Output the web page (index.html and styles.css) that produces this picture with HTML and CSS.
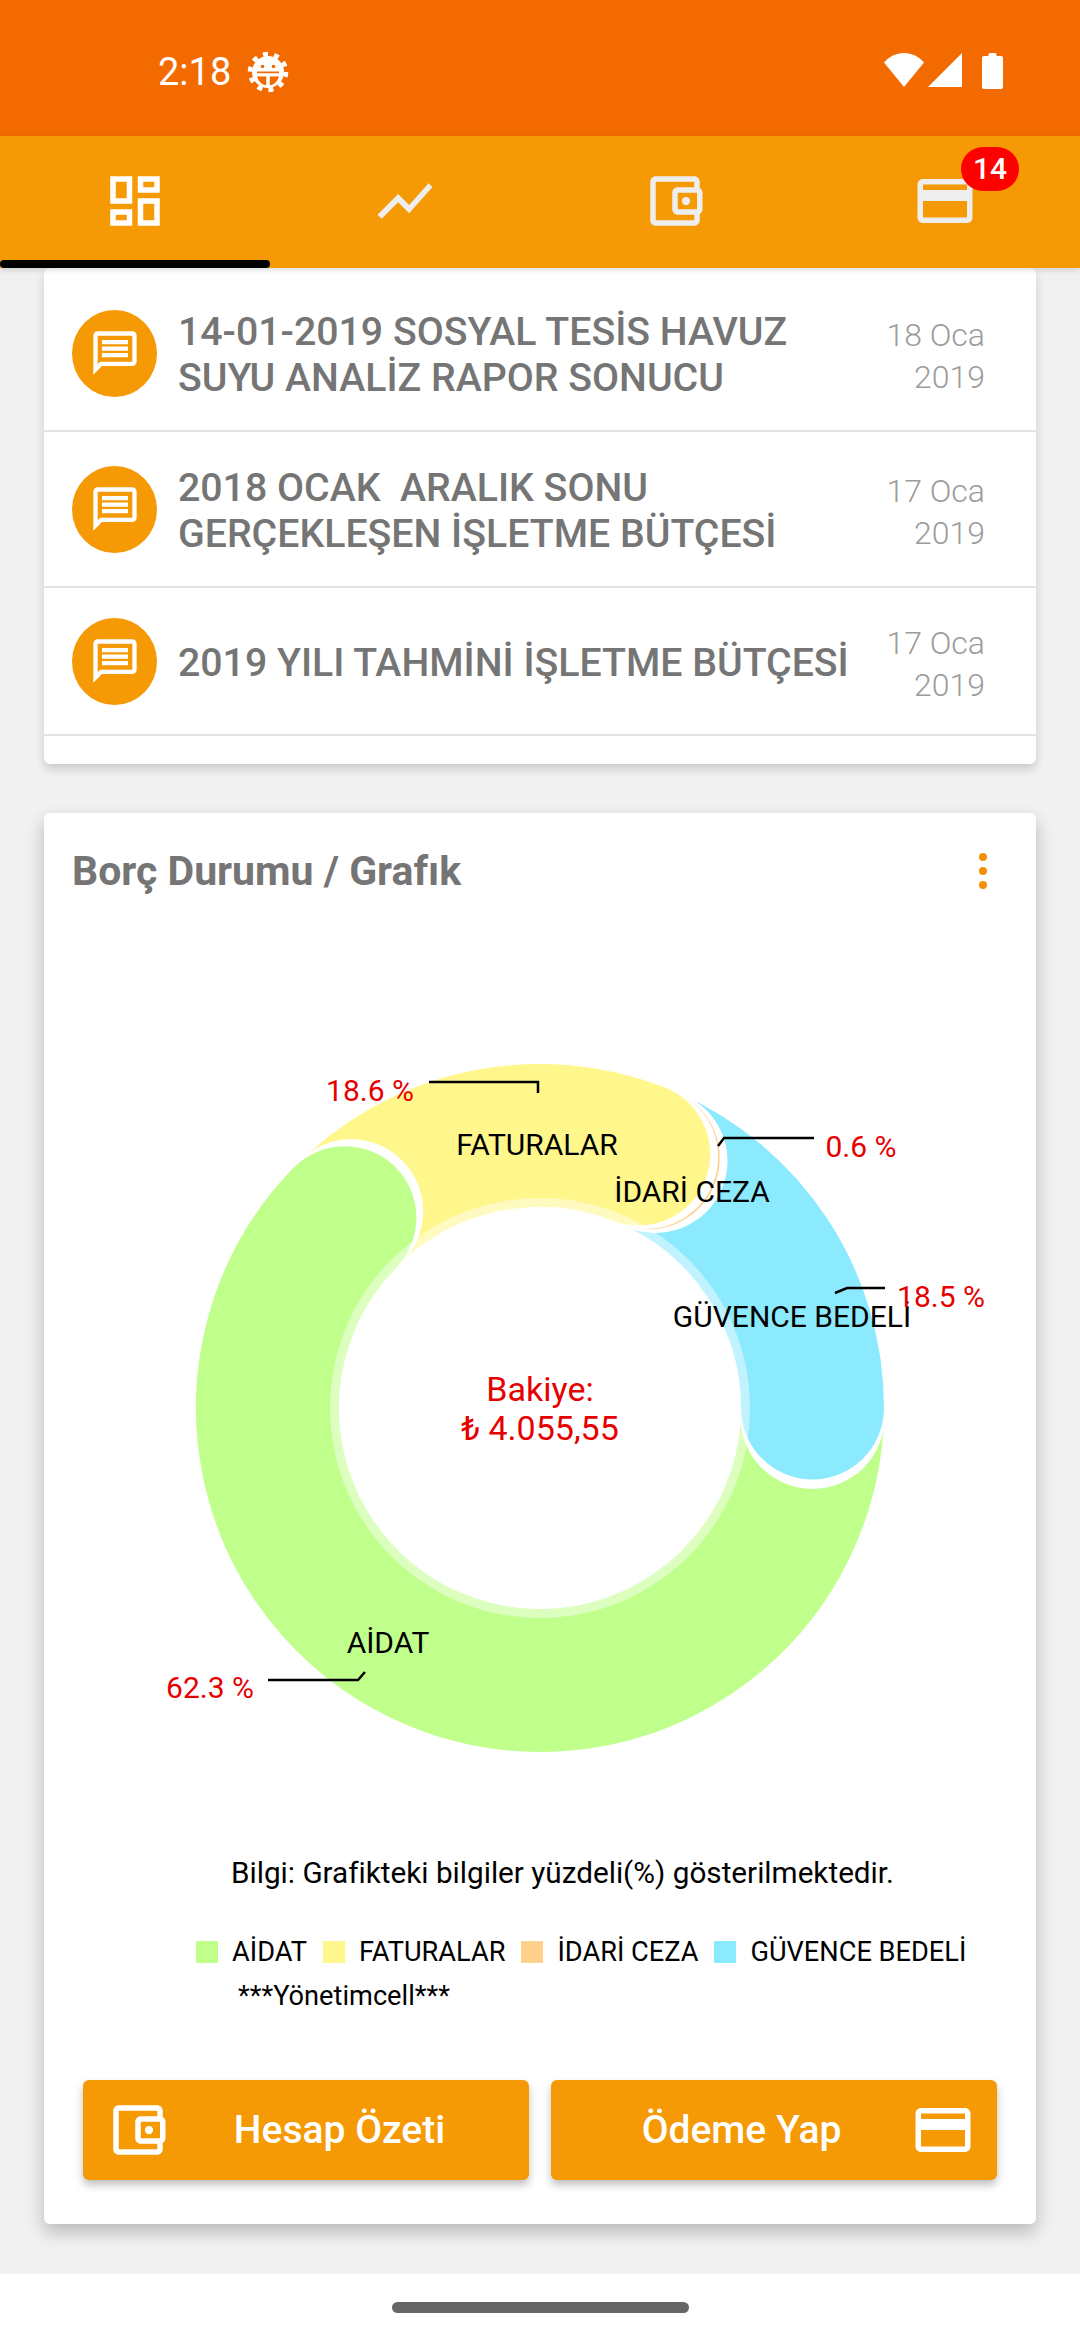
FILE: index.html
```html
<!DOCTYPE html>
<html lang="tr">
<head>
<meta charset="utf-8">
<title>Yönetimcell</title>
<link rel="stylesheet" href="styles.css">
</head>
<body>
<div class="screen">
  <header class="status">
    <div class="status-left">
      <span class="clock">2:18</span>
      <svg class="gear" viewBox="0 0 44 44">
        <circle cx="22" cy="22" r="18" fill="none" stroke="#fff" stroke-width="4.500" stroke-dasharray="5 6.310"/>
        <circle cx="22" cy="22" r="16" fill="#fff"/>
        <path d="M11 24.500h22a11 11 0 0 1-22 0z" fill="#f36a00"/>
        <rect x="11" y="21.500" width="22" height="2" fill="#f36a00"/>
        <rect x="10" y="23.400" width="24" height="3" fill="#fff"/>
        <rect x="20.200" y="26" width="3.600" height="10" fill="#fff"/>
        <circle cx="16.500" cy="16.500" r="1.800" fill="#f36a00"/>
        <circle cx="27.500" cy="16.500" r="1.800" fill="#f36a00"/>
      </svg>
    </div>
    <div class="status-right">
      <svg class="wifi" viewBox="0 0 40 34"><path d="M20 34 0 9.500C5 3.600 12 0 20 0s15 3.600 20 9.500z" fill="#fff"/></svg>
      <svg class="signal" viewBox="0 0 34 34"><path d="M34 0v34H0z" fill="#fff"/></svg>
      <svg class="battery" viewBox="0 0 21 36"><path d="M6.500 3V1.500q0-1.500 1.500-1.500h5q1.500 0 1.500 1.500V3H19q2 0 2 2v29q0 2-2 2H2q-2 0-2-2V5q0-2 2-2z" fill="#fff"/></svg>
    </div>
  </header>

  <nav class="tabs">
    <div class="tab">
      <svg class="tab-icon active" viewBox="0 0 24 24"><path d="M19 5v2h-4V5h4M9 5v6H5V5h4m10 8v6h-4v-6h4M9 17v2H5v-2h4M21 3h-8v6h8V3zM11 3H3v10h8V3zm10 8h-8v10h8V11zm-10 4H3v6h8v-6z"/></svg>
      <span class="tab-line"></span>
    </div>
    <div class="tab">
      <svg class="tab-icon" viewBox="0 0 24 24"><path d="M3.500 18.490l6-6.010 4 4L22 6.920l-1.410-1.410-7.090 7.970-4-4L2 16.990z"/></svg>
    </div>
    <div class="tab">
      <svg class="tab-icon" viewBox="0 0 24 24"><path d="M21 7.280V5c0-1.100-.9-2-2-2H5c-1.110 0-2 .9-2 2v14c0 1.100.89 2 2 2h14c1.100 0 2-.9 2-2v-2.280c.59-.35 1-.98 1-1.720V9c0-.74-.41-1.380-1-1.720zM20 9v6h-7V9h7zM5 19V5h14v2h-6c-1.100 0-2 .9-2 2v6c0 1.100.9 2 2 2h6v2H5z"/><circle cx="16" cy="12" r="1.500"/></svg>
    </div>
    <div class="tab">
      <svg class="tab-icon" viewBox="0 0 24 24"><path d="M20 4H4c-1.110 0-1.990.89-1.990 2L2 18c0 1.110.89 2 2 2h16c1.110 0 2-.89 2-2V6c0-1.110-.89-2-2-2zm0 14H4v-6h16v6zm0-10H4V6h16v2z"/></svg>
      <span class="badge">14</span>
    </div>
  </nav>

  <main class="content">
    <section class="card list-card">
      <article class="row row-first">
        <span class="avatar"><svg viewBox="0 0 24 24"><path d="M20 2H4c-1.100 0-1.990.9-1.990 2L2 22l4-4h14c1.100 0 2-.9 2-2V4c0-1.100-.9-2-2-2zm0 14H5.170L4 17.170V4h16v12zM6 12h12v2H6zm0-3h12v2H6zm0-3h12v2H6z"/></svg></span>
        <h2 class="row-title">14-01-2019 SOSYAL TESİS HAVUZ SUYU ANALİZ RAPOR SONUCU</h2>
        <time class="row-date">18 Oca 2019</time>
      </article>
      <article class="row row-second">
        <span class="avatar"><svg viewBox="0 0 24 24"><path d="M20 2H4c-1.100 0-1.990.9-1.990 2L2 22l4-4h14c1.100 0 2-.9 2-2V4c0-1.100-.9-2-2-2zm0 14H5.170L4 17.170V4h16v12zM6 12h12v2H6zm0-3h12v2H6zm0-3h12v2H6z"/></svg></span>
        <h2 class="row-title">2018 OCAK&nbsp; ARALIK SONU GERÇEKLEŞEN İŞLETME BÜTÇESİ</h2>
        <time class="row-date">17 Oca 2019</time>
      </article>
      <article class="row row-third">
        <span class="avatar"><svg viewBox="0 0 24 24"><path d="M20 2H4c-1.100 0-1.990.9-1.990 2L2 22l4-4h14c1.100 0 2-.9 2-2V4c0-1.100-.9-2-2-2zm0 14H5.170L4 17.170V4h16v12zM6 12h12v2H6zm0-3h12v2H6zm0-3h12v2H6z"/></svg></span>
        <h2 class="row-title">2019 YILI TAHMİNİ İŞLETME BÜTÇESİ</h2>
        <time class="row-date">17 Oca 2019</time>
      </article>
    </section>

    <section class="card chart-card">
      <div class="chart-head">
        <h1 class="chart-title">Borç Durumu / Grafık</h1>
        <span class="kebab"><i></i><i></i><i></i></span>
      </div>
      <svg class="donut" viewBox="44 920 992 920">
        <g fill="none" stroke-width="143">
          <path d="M812.500 1408A272.500 272.500 0 1 1 344.900 1217.700" stroke="#c0ff8c"/>
          <circle cx="812.500" cy="1417" r="72" fill="#fff" stroke="none"/>
          <path d="M648.200 1157.900A272.500 272.500 0 0 1 812.500 1408" stroke="#8ceaff" stroke-linecap="round"/>
          <circle cx="655.500" cy="1161" r="72" fill="#fff" stroke="none"/>
          <circle cx="648.200" cy="1157.900" r="71.500" fill="#ffd08c" stroke="none"/>
          <circle cx="646.200" cy="1156.900" r="72" fill="#fff" stroke="none"/>
          <path d="M344.900 1217.700A272.500 272.500 0 0 1 638.700 1154" stroke="#fff78c" stroke-linecap="round"/>
          <circle cx="351.200" cy="1211.300" r="72" fill="#fff" stroke="none"/>
          <path d="M276.800 1337.500A272.500 272.500 0 0 1 344.900 1217.700" stroke="#c0ff8c" stroke-linecap="round"/>
        </g>
        <circle cx="540" cy="1408" r="210" fill="#fff" fill-opacity=".45"/>
        <circle cx="540" cy="1408" r="200" fill="#fff"/>
        <g class="leaders">
          <path d="M429 1082H538V1093"/>
          <path d="M718 1146L724 1138H814"/>
          <path d="M835 1293L847 1288H885"/>
          <path d="M268 1680H358L365 1672"/>
        </g>
        <text class="lbl" x="537" y="1155" text-anchor="middle">FATURALAR</text>
        <text class="lbl" x="692" y="1202" text-anchor="middle">İDARİ CEZA</text>
        <text class="lbl" x="792" y="1327" text-anchor="middle">GÜVENCE BEDELİ</text>
        <text class="lbl" x="388" y="1653" text-anchor="middle">AİDAT</text>
        <text class="pct" x="370" y="1101" text-anchor="middle">18.6 %</text>
        <text class="pct" x="861" y="1157" text-anchor="middle">0.6 %</text>
        <text class="pct" x="941" y="1307" text-anchor="middle">18.5 %</text>
        <text class="pct" x="210" y="1698" text-anchor="middle">62.3 %</text>
        <text class="center" x="540" y="1401" text-anchor="middle">Bakiye:</text>
        <text class="center" x="540" y="1440" text-anchor="middle">₺ 4.055,55</text>
      </svg>
      <p class="info">Bilgi: Grafikteki bilgiler yüzdeli(%) gösterilmektedir.</p>
      <ul class="legend">
        <li><i class="sw sw-green"></i>AİDAT</li>
        <li><i class="sw sw-yellow"></i>FATURALAR</li>
        <li><i class="sw sw-orange"></i>İDARİ CEZA</li>
        <li><i class="sw sw-blue"></i>GÜVENCE BEDELİ</li>
      </ul>
      <p class="brand">***Yönetimcell***</p>
      <div class="actions">
        <button class="btn">
          <svg class="btn-icon" viewBox="0 0 24 24"><path d="M21 7.280V5c0-1.100-.9-2-2-2H5c-1.110 0-2 .9-2 2v14c0 1.100.89 2 2 2h14c1.100 0 2-.9 2-2v-2.280c.59-.35 1-.98 1-1.720V9c0-.74-.41-1.380-1-1.720zM20 9v6h-7V9h7zM5 19V5h14v2h-6c-1.100 0-2 .9-2 2v6c0 1.100.9 2 2 2h6v2H5z"/><circle cx="16" cy="12" r="1.500"/></svg>
          <span>Hesap Özeti</span>
        </button>
        <button class="btn btn-pay">
          <span>Ödeme Yap</span>
          <svg class="btn-icon" viewBox="0 0 24 24"><path d="M20 4H4c-1.110 0-1.990.89-1.990 2L2 18c0 1.110.89 2 2 2h16c1.110 0 2-.89 2-2V6c0-1.110-.89-2-2-2zm0 14H4v-6h16v6zm0-10H4V6h16v2z"/></svg>
        </button>
      </div>
    </section>
  </main>

  <footer class="home"><span class="pill"></span></footer>
</div>
</body>
</html>
```
FILE: styles.css
```css
* { box-sizing: border-box; }
html, body { margin: 0; padding: 0; }
body { font-family: Roboto, "Noto Sans", sans-serif; background: #f1f1f1; }
.screen { width: 1080px; height: 2340px; display: flex; flex-direction: column; overflow: hidden; background: #f1f1f1; }

.status { height: 136px; flex: none; background: #f36a00; display: flex; justify-content: space-between; align-items: flex-start; padding: 50px 77px 0 158px; }
.status-left { display: flex; align-items: center; gap: 15px; }
.clock { color: #fff; font-size: 38px; line-height: 44px; }
.gear { width: 44px; height: 44px; display: block; margin-top: -1px; }
.status-right { display: flex; align-items: flex-start; margin-top: 3px; }
.wifi { width: 40px; height: 34px; display: block; }
.signal { width: 34px; height: 34px; margin-left: 4px; display: block; }
.battery { width: 21px; height: 36px; margin-left: 20px; display: block; }

.tabs { height: 132px; flex: none; background: #f59905; display: flex; position: relative; z-index: 2; box-shadow: 0 2px 6px rgba(0,0,0,.14); }
.tab { flex: 1; position: relative; display: flex; align-items: center; justify-content: center; padding-bottom: 3px; }
.tab-icon { width: 66px; height: 66px; fill: #eeeeee; display: block; }
.tab-icon.active { fill: #fff; }
.tab-line { position: absolute; left: 0; right: 0; bottom: 0; height: 8px; background: #000; border-radius: 4px; }
.badge { position: absolute; left: 151px; top: 11px; width: 58px; height: 44px; border-radius: 22px; background: #f00; color: #fff; font-size: 30px; font-weight: 500; line-height: 44px; text-align: center; }

.content { flex: 1; min-height: 0; padding: 0 44px; }
.card { background: #fff; border-radius: 6px; }
.list-card { padding-bottom: 28px; box-shadow: 0 5px 10px rgba(0,0,0,.16); }
.row { display: flex; align-items: center; padding: 0 51px 0 28px; border-bottom: 2px solid #e2e2e2; }
.row-first { height: 164px; padding-top: 8px; }
.row-second { height: 156px; }
.row-third { height: 148px; }
.avatar { width: 85px; height: 87px; flex: none; border-radius: 50%; background: #f59905; display: flex; align-items: center; justify-content: center; }
.avatar svg { width: 52px; height: 52px; fill: #fff; display: block; }
.row-title { flex: 1; margin: 4px 0 0 21px; color: #757575; font-size: 39.250px; line-height: 46px; font-weight: 500; }
.row-date { flex: none; width: 110px; margin-top: 6px; text-align: right; color: #9c9c9c; font-size: 32px; line-height: 42px; font-weight: 300; }

.chart-card { margin-top: 49px; height: 1411px; box-shadow: 0 8px 18px rgba(0,0,0,.24); padding: 0 39px 0 0; }
.chart-head { height: 107px; display: flex; align-items: center; justify-content: space-between; padding: 8px 10px 0 28px; }
.chart-title { margin: 0; color: #757575; font-size: 41px; font-weight: 700; }
.kebab { display: flex; flex-direction: column; gap: 6px; }
.kebab i { width: 8px; height: 8px; border-radius: 50%; background: #f58f08; display: block; }
.donut { display: block; width: 992px; height: 920px; }
.leaders path { fill: none; stroke: #000; stroke-width: 2.500; }
.lbl { font-size: 30px; fill: #000; }
.pct { font-size: 30px; fill: #e60000; }
.center { font-size: 34px; fill: #e60000; }
.info { margin: 13px 0 0 187px; color: #000; font-size: 29.700px; line-height: 40px; }
.legend { list-style: none; margin: 39px 0 0 152px; padding: 0; display: flex; gap: 16px; font-size: 27.200px; line-height: 40px; color: #000; white-space: nowrap; }
.legend li { display: flex; align-items: center; gap: 14px; }
.sw { width: 22px; height: 22px; display: block; }
.sw-green { background: #c0ff8c; }
.sw-yellow { background: #fff78c; }
.sw-orange { background: #ffd08c; }
.sw-blue { background: #8ceaff; }
.brand { margin: 4px 0 0 194px; color: #000; font-size: 27.200px; line-height: 40px; }
.actions { display: flex; gap: 22px; margin: 64px 0 0 39px; width: 914px; }
.btn { flex: 1; height: 100px; border: 0; border-radius: 6px; background: #f59905; color: #fff; font: 500 39px Roboto, sans-serif; display: flex; align-items: center; padding: 0 21px 0 22px; box-shadow: 0 5px 8px rgba(0,0,0,.25); }
.btn span { flex: 1; text-align: center; }
.btn-icon { width: 66px; height: 66px; fill: #fff; display: block; flex: none; }

.home { height: 66px; flex: none; background: #fff; display: flex; justify-content: center; padding-top: 28px; position: relative; }
.pill { width: 297px; height: 11px; border-radius: 6px; background: #666; display: block; }
```
